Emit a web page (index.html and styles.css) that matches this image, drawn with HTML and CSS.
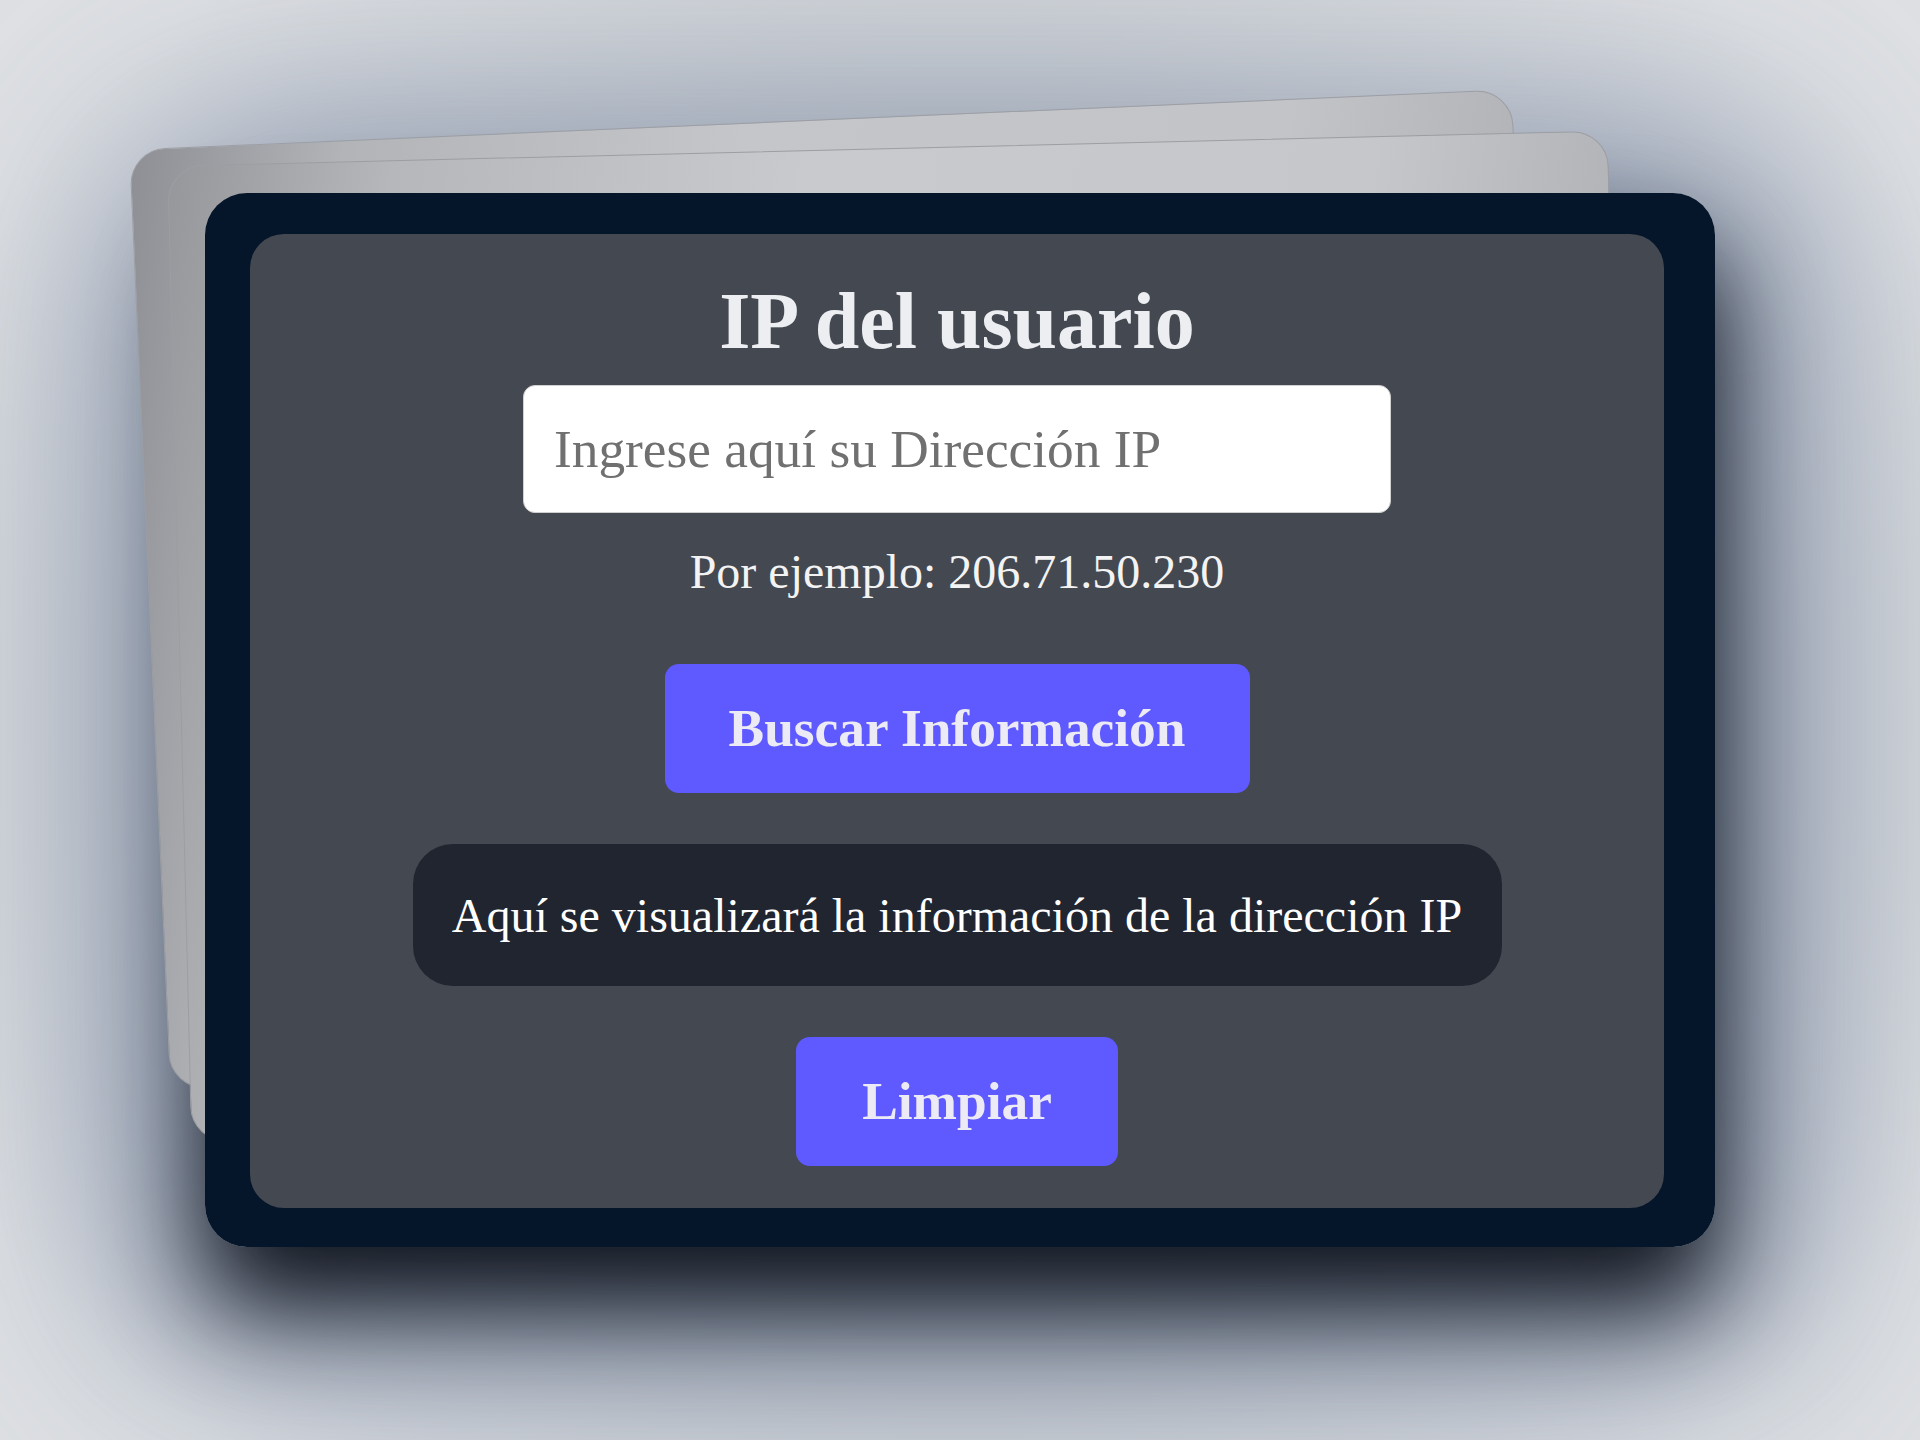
FILE: index.html
```html
<!DOCTYPE html>
<html lang="es">
<head>
<meta charset="utf-8">
<title>IP del usuario</title>
<link rel="stylesheet" href="styles.css">
</head>
<body>
<div class="stage">
  <div class="stack">
    <div class="glow"></div>
    <div class="sheet sheet-back"></div>
    <div class="sheet sheet-mid"></div>
    <div class="card">
      <div class="panel">
        <h1 class="title">IP del usuario</h1>
        <input class="ip-input" type="text" placeholder="Ingrese aquí su Dirección IP">
        <p class="hint">Por ejemplo: 206.71.50.230</p>
        <button class="btn btn-search" type="button">Buscar Información</button>
        <div class="result">Aquí se visualizará la información de la dirección IP</div>
        <button class="btn btn-clear" type="button">Limpiar</button>
      </div>
    </div>
  </div>
</div>
</body>
</html>
```
FILE: styles.css
```css
html, body {
  margin: 0;
  padding: 0;
}

body {
  width: 1920px;
  height: 1440px;
  overflow: hidden;
  font-family: "Liberation Serif", "Times New Roman", serif;
  background: radial-gradient(ellipse 1150px 950px at 50% 50%, #c0c5cc 0%, #c7cbd0 60%, #dfe1e4 100%);
}

.stage {
  width: 1920px;
  height: 1440px;
  display: flex;
  align-items: center;
  justify-content: center;
}

.stack {
  position: relative;
  width: 1510px;
  height: 1054px;
}

/* shadow layer painted beneath the stacked sheets */
.glow {
  position: absolute;
  inset: 0;
  border-radius: 42px;
  box-shadow:
    0 60px 100px 0 rgba(10, 14, 22, 0.95),
    0 30px 220px 80px rgba(98, 116, 148, 0.72);
}

.sheet {
  position: absolute;
  border-radius: 36px;
  border: 1px solid #9c9ea3;
  box-sizing: border-box;
}

.sheet-back {
  left: -56px;
  top: -74px;
  width: 1384px;
  height: 941px;
  transform: rotate(-2.5deg);
  background: linear-gradient(100deg, #8e8f94 0%, #b3b4b8 14%, #c5c6c9 40%, #c3c4c7 75%, #a9aaae 100%);
}

.sheet-mid {
  left: -26px;
  top: -45px;
  width: 1441px;
  height: 977px;
  transform: rotate(-1.4deg);
  background: linear-gradient(100deg, #96979b 0%, #b6b7bb 14%, #c9cacd 40%, #c6c7ca 75%, #a7a8ad 100%);
}

.card {
  position: relative;
  box-sizing: border-box;
  width: 1510px;
  height: 1054px;
  padding: 41px 51px 39px 45px;
  background: #05162a;
  border-radius: 42px;
}

.panel {
  box-sizing: border-box;
  height: 100%;
  background: #444851;
  border-radius: 34px;
  display: flex;
  flex-direction: column;
  align-items: center;
  padding-top: 41px;
}

.title {
  margin: 0;
  font-size: 80px;
  font-weight: bold;
  line-height: 92px;
  color: #eceef1;
}

.ip-input {
  box-sizing: border-box;
  margin-top: 18px;
  width: 868px;
  height: 128px;
  padding: 0 30px;
  border: 1px solid #d0d0d0;
  border-radius: 12px;
  background: #ffffff;
  font-family: "Liberation Serif", "Times New Roman", serif;
  font-size: 53.33px;
  color: #222;
  outline: none;
}

.ip-input::placeholder {
  color: #707070;
}

.hint {
  margin: 31px 0 0;
  font-size: 48px;
  line-height: 55px;
  color: #f3f3f3;
}

.btn {
  box-sizing: border-box;
  height: 129px;
  border: none;
  border-radius: 14px;
  background: #5f5aff;
  color: #ecebf5;
  font-family: "Liberation Serif", "Times New Roman", serif;
  font-size: 53.33px;
  font-weight: bold;
  line-height: 61px;
  padding: 0;
  cursor: pointer;
}

.btn-search {
  margin-top: 65px;
  width: 585px;
}

.btn-clear {
  margin-top: 51px;
  width: 322px;
}

.result {
  box-sizing: border-box;
  margin-top: 51px;
  width: 1089px;
  height: 142px;
  display: flex;
  align-items: center;
  justify-content: center;
  background: #21252f;
  border-radius: 40px;
  font-size: 48px;
  line-height: 55px;
  color: #ffffff;
}
```
